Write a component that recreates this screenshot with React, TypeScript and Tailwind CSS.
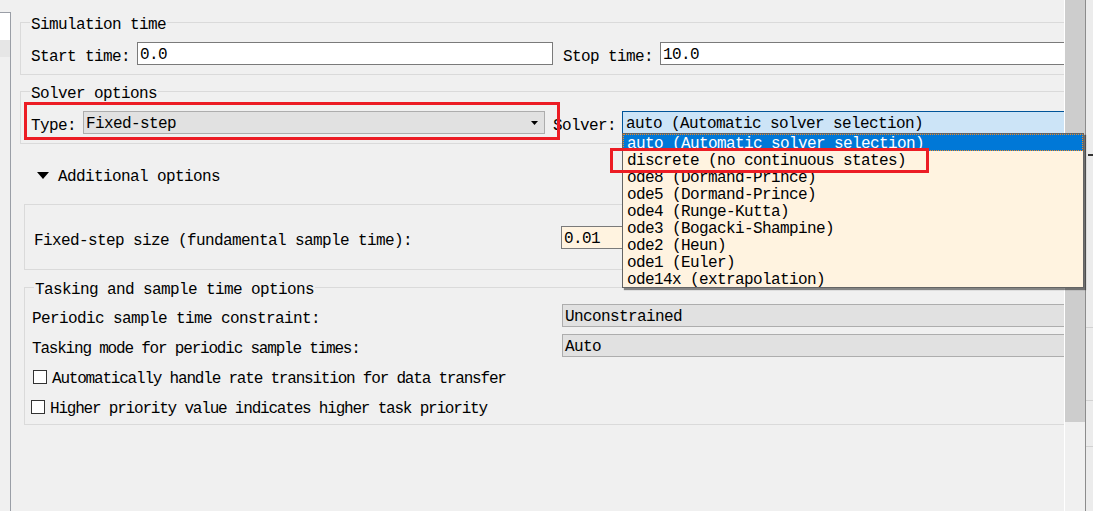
const solvers = [
  'auto (Automatic solver selection)',
  'discrete (no continuous states)',
  'ode8 (Dormand-Prince)',
  'ode5 (Dormand-Prince)',
  'ode4 (Runge-Kutta)',
  'ode3 (Bogacki-Shampine)',
  'ode2 (Heun)',
  'ode1 (Euler)',
  'ode14x (extrapolation)',
];

const DownArrow = ({ w, h }: { w: number; h: number }) => (
  <svg width={w} height={h} viewBox={`0 0 ${w} ${h}`}>
    <polygon points={`0,0 ${w},0 ${w / 2},${h}`} fill="#000" />
  </svg>
);

const Checkbox = ({ className }: { className?: string }) => (
  <span className={`h-[14px] w-[14px] shrink-0 border border-[#333] bg-white ${className ?? ''}`} />
);

export default function App() {
  return (
    <div className="relative flex h-[511px] w-[1093px] overflow-hidden bg-[#f0f0f0] font-['Liberation_Mono',monospace] text-[16px] leading-[17px] tracking-[-0.6px] text-black">
      {/* edge of the tree panel on the left */}
      <div className="w-[11px] shrink-0 pt-[12px]">
        <div className="h-full border-t border-r border-[#9a9ea6]">
          <div className="h-[27px] bg-white" />
          <div className="h-[17px] bg-[#e6e6e6]" />
        </div>
      </div>

      <div className="w-[1053px] shrink-0 overflow-hidden">
        {/* Simulation time */}
        <div className="ml-[9px] mt-[22px] h-[53px] border border-r-0 border-[#dadada] pl-[10px]">
          <div className="-ml-[1px] -mt-[6px] h-[17px] w-fit bg-[#f0f0f0] px-[1px]">Simulation time</div>
          <div className="mt-[8px] flex h-[23px] items-center">
            <span className="w-[106px] pt-[7px]">Start time:</span>
            <div className="flex h-[23px] w-[416px] items-center border border-[#7a7a7a] bg-white pl-[2px] pt-[3px]">0.0</div>
            <span className="ml-[10px] w-[97px] pt-[7px]">Stop time:</span>
            <div className="flex h-[23px] flex-1 items-center border border-r-0 border-[#7a7a7a] bg-white pl-[2px] pt-[3px]">10.0</div>
          </div>
        </div>

        {/* Solver options */}
        <div className="ml-[9px] mt-[16px] h-[53px] border border-r-0 border-[#dadada] pl-[10px]">
          <div className="-ml-[1px] -mt-[6px] h-[17px] w-fit bg-[#f0f0f0] px-[1px]">Solver options</div>
          <div className="mt-[8px] flex h-[23px] items-center">
            <span className="w-[52px] pt-[7px]">Type:</span>
            <div className="flex h-[23px] w-[462px] items-center justify-between border border-[#adadad] bg-[#e1e1e1] pl-[2px] pr-[6px] pt-[3px]">
              <span>Fixed-step</span>
              <span className="-mt-[3px]">
                <DownArrow w={7} h={4} />
              </span>
            </div>
            <span className="ml-[8px] w-[69px] pt-[7px]">Solver:</span>
            <div className="flex h-[23px] flex-1 items-center border border-r-0 border-[#005499] bg-[#cce4f7] pl-[3px] pt-[3px]">
              auto (Automatic solver selection)
            </div>
          </div>
        </div>

        {/* Additional options */}
        <div className="ml-[26px] mt-[23px] flex h-[17px] items-center">
          <DownArrow w={12} h={7} />
          <span className="ml-[9px] pt-[3px]">Additional options</span>
        </div>

        {/* Fixed-step size */}
        <div className="ml-[13px] mt-[20px] h-[66px] border border-r-0 border-[#dadada] pl-[9px] pt-[21px]">
          <div className="flex h-[23px] items-center">
            <span className="w-[527px] pt-[7px]">Fixed-step size (fundamental sample time):</span>
            <div className="flex h-[23px] flex-1 items-center border border-r-0 border-[#7a7a7a] bg-[#fff3e0] pl-[2px] pt-[3px]">0.01</div>
          </div>
        </div>

        {/* Tasking and sample time options */}
        <div className="ml-[13px] mt-[17px] h-[138px] border border-r-0 border-[#dadada] pl-[7px]">
          <div className="-mt-[6px] ml-[2px] h-[17px] w-fit bg-[#f0f0f0] px-[1px]">Tasking and sample time options</div>
          <div className="mt-[5px] flex h-[23px] items-center">
            <span className="w-[530px] pt-[7px]">Periodic sample time constraint:</span>
            <div className="flex h-[23px] flex-1 items-center border border-r-0 border-[#adadad] bg-[#e1e1e1] pl-[2px] pt-[3px]">Unconstrained</div>
          </div>
          <div className="mt-[7px] flex h-[23px] items-center">
            <span className="w-[530px] pt-[7px] tracking-[-1.2px]">Tasking mode for periodic sample times:</span>
            <div className="flex h-[23px] flex-1 items-center border border-r-0 border-[#adadad] bg-[#e1e1e1] pl-[2px] pt-[3px]">Auto</div>
          </div>
          <div className="mt-[11px] flex h-[17px] items-center">
            <Checkbox className="ml-[1px]" />
            <span className="ml-[5px] pt-[6px] tracking-[-1.2px]">Automatically handle rate transition for data transfer</span>
          </div>
          <div className="mt-[13px] flex h-[17px] items-center">
            <Checkbox className="-ml-[1px]" />
            <span className="ml-[5px] pt-[6px] tracking-[-1.2px]">Higher priority value indicates higher task priority</span>
          </div>
        </div>
      </div>

      {/* vertical scrollbar */}
      <div className="w-[21px] shrink-0 border-l border-white">
        <div className="h-[422px] w-[20px] bg-[#cdcdcd]" />
      </div>
      <div className="w-px shrink-0 bg-[#8c8c8c]" />
      <div className="flex w-[7px] shrink-0 flex-col bg-[#ececec]">
        <div className="h-[154px]" />
        <div className="ml-[2px] h-[2px] bg-[#333]" />
        <div className="h-[171px]" />
        <div className="h-px bg-[#d2d2d2]" />
        <div className="h-[72px]" />
        <div className="h-px bg-[#d2d2d2]" />
        <div className="h-[45px]" />
        <div className="h-px bg-[#d2d2d2]" />
      </div>

      {/* open solver list */}
      <div className="absolute left-[622px] top-[133px] h-[155px] w-[462px] border border-[#646464] bg-[#fff3e0] shadow-[2px_2px_1px_rgba(0,0,0,0.45)]">
        {solvers.map((s, i) => (
          <div
            key={s}
            className={
              i === 0
                ? 'h-[17px] border border-dotted border-[#f08a24] bg-[#0078d7] pl-[3px] pt-[1px] leading-[17px] text-white'
                : 'h-[17px] pl-[4px] pt-[2px] leading-[17px]'
            }
          >
            {s}
          </div>
        ))}
      </div>

      {/* red annotation boxes */}
      <div className="pointer-events-none absolute left-[24px] top-[102px] h-[38px] w-[536px] border-[3px] border-[#ec1c24]" />
      <div className="pointer-events-none absolute left-[610px] top-[148px] h-[25px] w-[319px] border-[3px] border-[#ec1c24]" />
    </div>
  );
}
